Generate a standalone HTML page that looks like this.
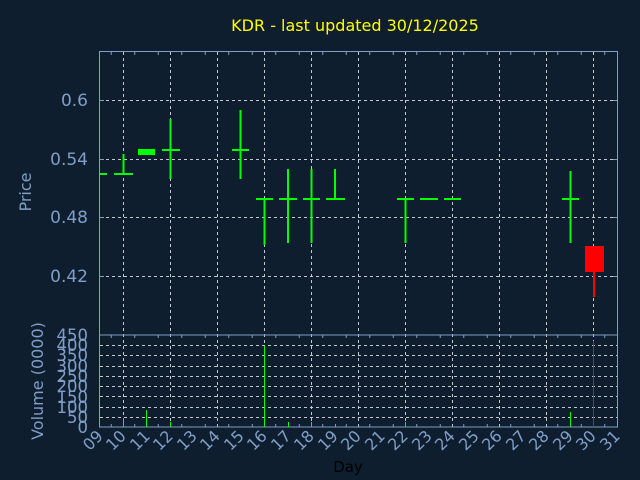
<!DOCTYPE html>
<html><head><meta charset="utf-8"><style>
html,body{margin:0;padding:0;background:#0f1e2e;}
svg{display:block}
text{font-family:"DejaVu Sans","Liberation Sans",sans-serif;fill:#7f9fc8}
</style></head><body>
<svg width="640" height="480" viewBox="0 0 640 480" xmlns="http://www.w3.org/2000/svg">
<rect width="640" height="480" fill="#0f1e2e"/>
<text x="355" y="31" text-anchor="middle" font-size="16" style="fill:#ffff00">KDR - last updated 30/12/2025</text>
<g stroke="#c8c8c8" stroke-width="1" stroke-dasharray="3,3">
<line x1="123.5" y1="52" x2="123.5" y2="427"/>
<line x1="170.5" y1="52" x2="170.5" y2="427"/>
<line x1="217.5" y1="52" x2="217.5" y2="427"/>
<line x1="264.5" y1="52" x2="264.5" y2="427"/>
<line x1="311.5" y1="52" x2="311.5" y2="427"/>
<line x1="358.5" y1="52" x2="358.5" y2="427"/>
<line x1="405.5" y1="52" x2="405.5" y2="427"/>
<line x1="452.5" y1="52" x2="452.5" y2="427"/>
<line x1="499.5" y1="52" x2="499.5" y2="427"/>
<line x1="546.5" y1="52" x2="546.5" y2="427"/>
<line x1="593.5" y1="52" x2="593.5" y2="427"/>
<line x1="100" y1="100.5" x2="617" y2="100.5"/>
<line x1="100" y1="159.5" x2="617" y2="159.5"/>
<line x1="100" y1="217.5" x2="617" y2="217.5"/>
<line x1="100" y1="276.5" x2="617" y2="276.5"/>
<line x1="100" y1="345.5" x2="617" y2="345.5"/>
<line x1="100" y1="355.5" x2="617" y2="355.5"/>
<line x1="100" y1="366.5" x2="617" y2="366.5"/>
<line x1="100" y1="376.5" x2="617" y2="376.5"/>
<line x1="100" y1="386.5" x2="617" y2="386.5"/>
<line x1="100" y1="396.5" x2="617" y2="396.5"/>
<line x1="100" y1="407.5" x2="617" y2="407.5"/>
<line x1="100" y1="417.5" x2="617" y2="417.5"/>
</g>
<g stroke="#7f9fc8" stroke-width="1" fill="none">
<rect x="99.5" y="51.5" width="518" height="283.5"/>
<rect x="99.5" y="335" width="518" height="92"/>
<path d="M111.25 52v3M134.75 52v3M158.25 52v3M181.75 52v3M205.25 52v3M228.75 52v3M252.25 52v3M275.75 52v3M299.25 52v3M322.75 52v3M346.25 52v3M369.75 52v3M393.25 52v3M416.75 52v3M440.25 52v3M463.75 52v3M487.25 52v3M510.75 52v3M534.25 52v3M557.75 52v3M581.25 52v3M604.75 52v3"/>
<path d="M111.25 335v3M134.75 335v3M158.25 335v3M181.75 335v3M205.25 335v3M228.75 335v3M252.25 335v3M275.75 335v3M299.25 335v3M322.75 335v3M346.25 335v3M369.75 335v3M393.25 335v3M416.75 335v3M440.25 335v3M463.75 335v3M487.25 335v3M510.75 335v3M534.25 335v3M557.75 335v3M581.25 335v3M604.75 335v3"/>
<path d="M111.25 427v-3M134.75 427v-3M158.25 427v-3M181.75 427v-3M205.25 427v-3M228.75 427v-3M252.25 427v-3M275.75 427v-3M299.25 427v-3M322.75 427v-3M346.25 427v-3M369.75 427v-3M393.25 427v-3M416.75 427v-3M440.25 427v-3M463.75 427v-3M487.25 427v-3M510.75 427v-3M534.25 427v-3M557.75 427v-3M581.25 427v-3M604.75 427v-3"/>
<path d="M100 100.5h4M100 159.5h4M100 217.5h4M100 276.5h4M613 100.5h4M613 159.5h4M613 217.5h4M613 276.5h4"/>
</g>
<g stroke="#00ff00" stroke-width="2" fill="none">
<path d="M100 174h7M114 174h19M123.5 154v20"/>
<path d="M162 150h18M170.5 119v60"/>
<path d="M232 150h17M240.5 110v69"/>
<path d="M256 199h17M264.5 199v46"/>
<path d="M279 199h18M288 169v74"/>
<path d="M303 199h17M311.5 169v74"/>
<path d="M326 199h19M335 169v30"/>
<path d="M397 199h17M405.5 199v44"/>
<path d="M420 199h18M444 199h17"/>
<path d="M562 199h17M570.5 171v72"/>
</g>
<g stroke="#00ff00" stroke-width="1">
<path d="M123.5 418v9M146.5 410v17M170.5 422v5M264.5 346v81M288.5 422v5M311.5 422v5M335.5 424v3M405.5 422v5M570.5 412v15"/>
</g>
<rect x="138" y="149" width="17" height="6" fill="#00ff00"/>
<rect x="585" y="246" width="19" height="26" fill="#ff0000"/>
<path d="M594 272v25" stroke="#ff0000" stroke-width="2"/>
<path d="M593.5 341v86" stroke="#ff0000" stroke-width="1"/>
<g font-size="17" text-anchor="end">
<text x="88" y="106">0.6</text>
<text x="88" y="165">0.54</text>
<text x="88" y="223">0.48</text>
<text x="88" y="282">0.42</text>
</g>
<g font-size="16.5" text-anchor="end">
<text x="88" y="433">0</text>
<text x="88" y="423">50</text>
<text x="88" y="413">100</text>
<text x="88" y="403">150</text>
<text x="88" y="392">200</text>
<text x="88" y="382">250</text>
<text x="88" y="372">300</text>
<text x="88" y="361">350</text>
<text x="88" y="351">400</text>
<text x="88" y="341">450</text>
</g>
<text transform="translate(31,192) rotate(-90)" font-size="16" text-anchor="middle">Price</text>
<text transform="translate(43,381) rotate(-90)" font-size="16" text-anchor="middle">Volume (0000)</text>
<text x="348" y="472" font-size="15" text-anchor="middle" style="fill:#000">Day</text>
<g font-size="16" text-anchor="end">
<text transform="translate(104,437) rotate(-45)">09</text>
<text transform="translate(127,437) rotate(-45)">10</text>
<text transform="translate(151,437) rotate(-45)">11</text>
<text transform="translate(174,437) rotate(-45)">12</text>
<text transform="translate(198,437) rotate(-45)">13</text>
<text transform="translate(221,437) rotate(-45)">14</text>
<text transform="translate(245,437) rotate(-45)">15</text>
<text transform="translate(268,437) rotate(-45)">16</text>
<text transform="translate(292,437) rotate(-45)">17</text>
<text transform="translate(315,437) rotate(-45)">18</text>
<text transform="translate(339,437) rotate(-45)">19</text>
<text transform="translate(362,437) rotate(-45)">20</text>
<text transform="translate(386,437) rotate(-45)">21</text>
<text transform="translate(409,437) rotate(-45)">22</text>
<text transform="translate(433,437) rotate(-45)">23</text>
<text transform="translate(456,437) rotate(-45)">24</text>
<text transform="translate(480,437) rotate(-45)">25</text>
<text transform="translate(503,437) rotate(-45)">26</text>
<text transform="translate(527,437) rotate(-45)">27</text>
<text transform="translate(550,437) rotate(-45)">28</text>
<text transform="translate(574,437) rotate(-45)">29</text>
<text transform="translate(597,437) rotate(-45)">30</text>
<text transform="translate(621,437) rotate(-45)">31</text>
</g>
</svg>
</body></html>
